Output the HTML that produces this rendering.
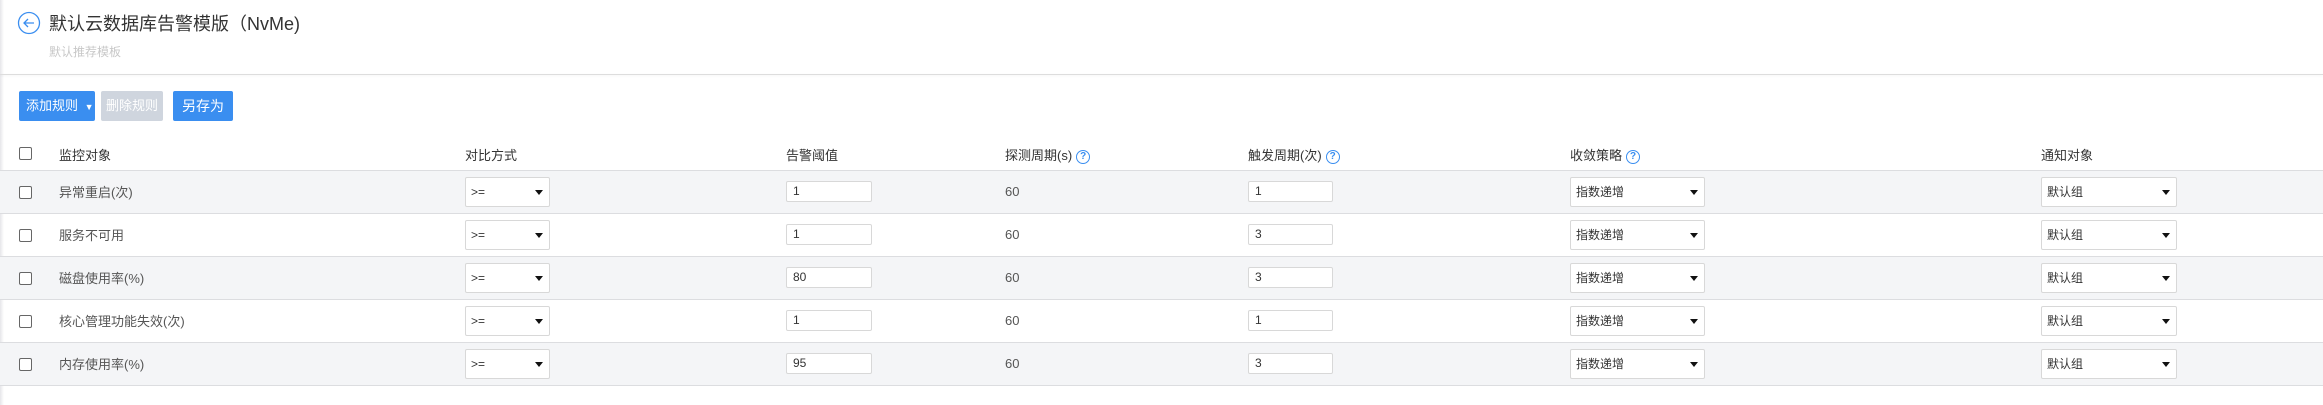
<!DOCTYPE html>
<html><head><meta charset="utf-8"><style>
*{box-sizing:border-box;margin:0;padding:0}
body{width:2323px;height:405px;background:#fff;font-family:"Liberation Sans","Noto Sans CJK SC",sans-serif;font-size:13px;color:#555;position:relative;overflow:hidden}
.edge{position:absolute;left:0;top:0;width:4px;height:405px;background:linear-gradient(to right,#e6e6ea,#fff)}
.a{position:absolute;white-space:nowrap}
.btn{position:absolute;top:91px;height:30px;border-radius:2px;color:#fff;font-size:13px;line-height:30px;text-align:center}
.row{position:absolute;left:0;width:2323px;height:43px;border-top:1px solid #dcdde0}
.g{background:#f4f5f7}
.cb{position:absolute;left:19px;width:13px;height:13px;border:1px solid #666;border-radius:2px;background:#fff}
.sel{position:absolute;height:30px;background:#fff;border:1px solid #d8d8d8;border-radius:2px;font-size:12px;color:#333;line-height:28px;padding-left:5px}
.sel:after{content:"";position:absolute;right:6px;top:12px;border-left:4px solid transparent;border-right:4px solid transparent;border-top:5px solid #111}
.inp{position:absolute;height:21px;background:#fff;border:1px solid #d8d8d8;border-radius:2px;font-size:12px;color:#333;line-height:19px;padding-left:6px}
.q{display:inline-block;width:14px;height:14px;border:1.3px solid #3a8ef0;border-radius:50%;color:#3a8ef0;font-size:10px;line-height:12px;text-align:center;vertical-align:middle;margin-left:4px;font-weight:bold}
.r{position:absolute;white-space:nowrap;margin-top:-2px}
.n{position:absolute;white-space:nowrap}
</style></head><body>
<div class="edge"></div>
<svg class="a" style="left:17px;top:11px" width="24" height="24" viewBox="0 0 24 24"><circle cx="12" cy="12" r="10.5" fill="none" stroke="#3a8ef0" stroke-width="1.3"/><path d="M17 12H7M11 8l-4 4 4 4" fill="none" stroke="#3a8ef0" stroke-width="1.3"/></svg>
<div class="a" style="left:49px;top:10px;font-size:18px;color:#333">默认云数据库告警模版（NvMe)</div>
<div class="a" style="left:49px;top:43px;font-size:12px;color:#c8c8c8">默认推荐模板</div>
<div class="a" style="left:0;top:74px;width:2323px;height:1px;background:#ddd;box-shadow:0 1px 2px rgba(0,0,0,.06)"></div>
<div class="btn" style="left:19px;width:76px;background:#3a8ef0;text-align:left;padding-left:7px">添加规则 <span style="font-size:9px;margin-left:3px">▼</span></div>
<div class="btn" style="left:101px;width:62px;background:#cfd5de">删除规则</div>
<div class="btn" style="left:173px;width:60px;background:#3a8ef0;font-size:14px">另存为</div>
<div class="cb" style="top:147px"></div>
<div class="a" style="left:59px;top:145px;color:#333">监控对象</div>
<div class="a" style="left:465px;top:145px;color:#333">对比方式</div>
<div class="a" style="left:786px;top:145px;color:#333">告警阈值</div>
<div class="a" style="left:1005px;top:145px;color:#333">探测周期(s)<span class="q">?</span></div>
<div class="a" style="left:1248px;top:145px;color:#333">触发周期(次)<span class="q">?</span></div>
<div class="a" style="left:1570px;top:145px;color:#333">收敛策略<span class="q">?</span></div>
<div class="a" style="left:2041px;top:145px;color:#333">通知对象</div>

<div class="row g" style="top:170px"></div>
<div class="row" style="top:213px"></div>
<div class="row g" style="top:256px"></div>
<div class="row" style="top:299px"></div>
<div class="row g" style="top:342px"></div>
<div class="row" style="top:385px;height:1px"></div>

<div class="cb" style="top:186px"></div><div class="r" style="left:59px;top:184px">异常重启(次)</div>
<div class="sel" style="left:465px;top:177px;width:85px">&gt;=</div><div class="inp" style="left:786px;top:181px;width:86px">1</div><div class="n" style="left:1005px;top:184px">60</div><div class="inp" style="left:1248px;top:181px;width:85px">1</div><div class="sel" style="left:1570px;top:177px;width:135px">指数递增</div><div class="sel" style="left:2041px;top:177px;width:136px">默认组</div>

<div class="cb" style="top:229px"></div><div class="r" style="left:59px;top:227px">服务不可用</div>
<div class="sel" style="left:465px;top:220px;width:85px">&gt;=</div><div class="inp" style="left:786px;top:224px;width:86px">1</div><div class="n" style="left:1005px;top:227px">60</div><div class="inp" style="left:1248px;top:224px;width:85px">3</div><div class="sel" style="left:1570px;top:220px;width:135px">指数递增</div><div class="sel" style="left:2041px;top:220px;width:136px">默认组</div>

<div class="cb" style="top:272px"></div><div class="r" style="left:59px;top:270px">磁盘使用率(%)</div>
<div class="sel" style="left:465px;top:263px;width:85px">&gt;=</div><div class="inp" style="left:786px;top:267px;width:86px">80</div><div class="n" style="left:1005px;top:270px">60</div><div class="inp" style="left:1248px;top:267px;width:85px">3</div><div class="sel" style="left:1570px;top:263px;width:135px">指数递增</div><div class="sel" style="left:2041px;top:263px;width:136px">默认组</div>

<div class="cb" style="top:315px"></div><div class="r" style="left:59px;top:313px">核心管理功能失效(次)</div>
<div class="sel" style="left:465px;top:306px;width:85px">&gt;=</div><div class="inp" style="left:786px;top:310px;width:86px">1</div><div class="n" style="left:1005px;top:313px">60</div><div class="inp" style="left:1248px;top:310px;width:85px">1</div><div class="sel" style="left:1570px;top:306px;width:135px">指数递增</div><div class="sel" style="left:2041px;top:306px;width:136px">默认组</div>

<div class="cb" style="top:358px"></div><div class="r" style="left:59px;top:356px">内存使用率(%)</div>
<div class="sel" style="left:465px;top:349px;width:85px">&gt;=</div><div class="inp" style="left:786px;top:353px;width:86px">95</div><div class="n" style="left:1005px;top:356px">60</div><div class="inp" style="left:1248px;top:353px;width:85px">3</div><div class="sel" style="left:1570px;top:349px;width:135px">指数递增</div><div class="sel" style="left:2041px;top:349px;width:136px">默认组</div>
</body></html>
